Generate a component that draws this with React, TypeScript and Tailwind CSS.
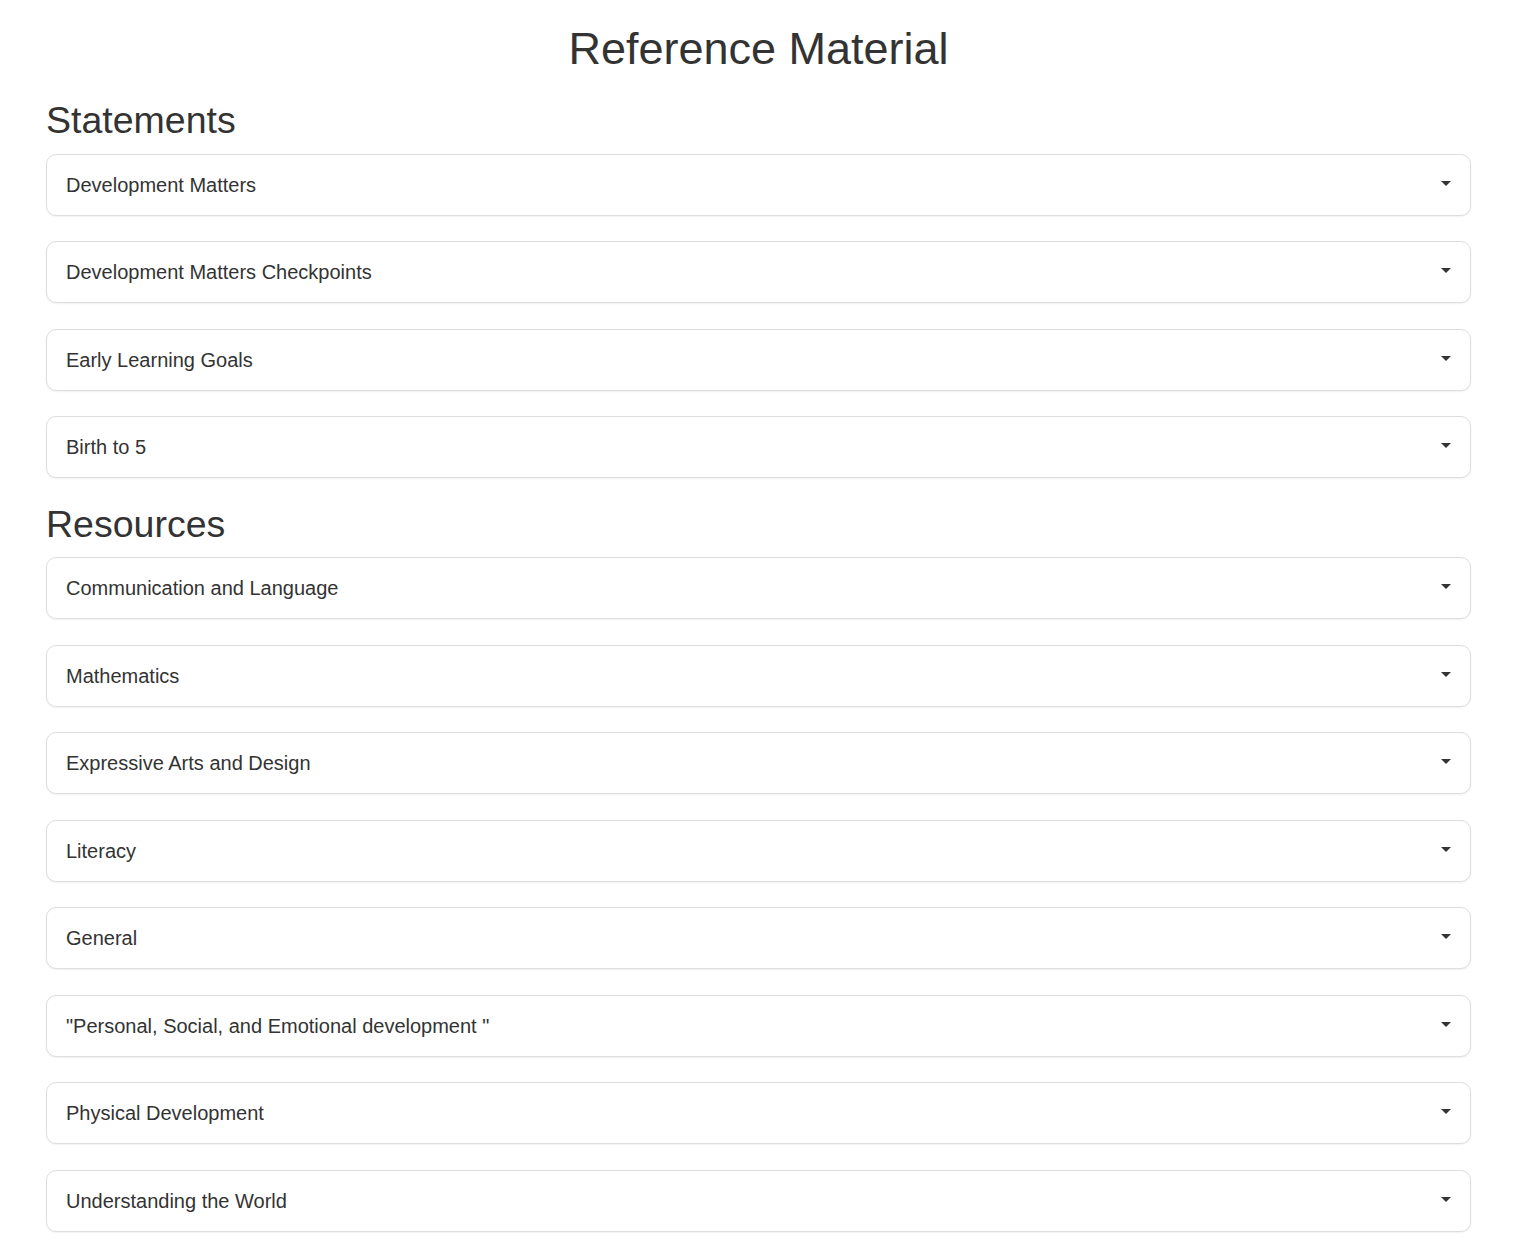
const statements = [
  "Development Matters",
  "Development Matters Checkpoints",
  "Early Learning Goals",
  "Birth to 5",
];

const resources = [
  "Communication and Language",
  "Mathematics",
  "Expressive Arts and Design",
  "Literacy",
  "General",
  '"Personal, Social, and Emotional development "',
  "Physical Development",
  "Understanding the World",
];

function Caret() {
  return (
    <span className="mb-[3px] block h-0 w-0 border-x-[5px] border-t-[5px] border-x-transparent border-t-[#333]" />
  );
}

function Section({ title, items }: { title: string; items: string[] }) {
  return (
    <section>
      <h2 className="mb-[10.5px] text-[37.5px] leading-[1.2] font-normal">{title}</h2>
      <div className="flex flex-col gap-[25.5px]">
        {items.map((item) => (
          <button
            key={item}
            type="button"
            className="flex h-[62px] w-full items-center justify-between rounded-[10px] border border-[#dedede] bg-white pl-[19px] pr-[19px] text-left text-[20px] leading-[30px] text-[#333] shadow-[0_1px_2px_rgba(0,0,0,0.06)]"
          >
            <span>{item}</span>
            <Caret />
          </button>
        ))}
      </div>
    </section>
  );
}

export default function App() {
  return (
    <div className="min-h-screen bg-white font-['Liberation_Sans',Arial,sans-serif] text-[#333]">
      <div className="ml-[46px] w-[1425px] pt-[22px] pb-[16px]">
        <h1 className="mb-[22px] text-center text-[45px] leading-[1.2] font-normal">
          Reference Material
        </h1>
        <div className="flex flex-col gap-[23.5px]">
          <Section title="Statements" items={statements} />
          <Section title="Resources" items={resources} />
        </div>
      </div>
    </div>
  );
}
